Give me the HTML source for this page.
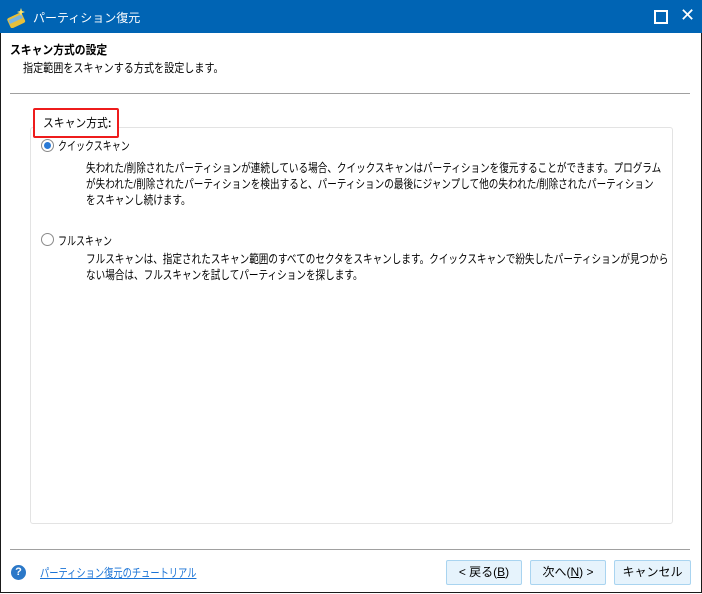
<!DOCTYPE html>
<html><head><meta charset="utf-8"><style>
body{margin:0;width:702px;height:594px;overflow:hidden;font-family:"Liberation Sans","Noto Sans CJK JP",sans-serif;font-size:12px;color:#000;background:#fff;position:relative}
.a{position:absolute;white-space:nowrap;transform-origin:left top}
.win{position:absolute;left:0;top:0;width:700px;height:592px;border:1px solid #1a1a1a;border-top:none}
.title{position:absolute;left:0;top:0;width:702px;height:33px;background:#0064b4}
.btn{position:absolute;top:560px;height:23px;border:1px solid #a9d4f0;background:#e6f3fc;border-radius:2px;text-align:center;line-height:23px;font-size:12px}
.radio{position:absolute;width:11px;height:11px;border:1px solid #8a8a8a;border-radius:50%;background:#fff}
</style></head><body>
<div class="win"></div>
<div class="title"></div>
<svg class="a" style="left:6px;top:6px" width="22" height="22" viewBox="0 0 22 22"><rect x="2" y="9" width="16" height="11" rx="2" fill="#e8c03a" transform="rotate(-25 10 14)"/><rect x="3" y="11" width="14" height="4" fill="#7ab4e0" transform="rotate(-25 10 14)"/><path d="M15 2l1 3 3 1-3 1-1 3-1-3-3-1 3-1z" fill="#ffe46a"/></svg>
<div class="a" style="left:33px;top:9px;color:#fff">パーティション復元</div>
<div class="a" style="left:654px;top:10px;width:10px;height:10px;border:2px solid #fff"></div>
<div class="a" style="left:680px;top:5px;color:#fff;font-size:18px;line-height:20px">✕</div>
<div class="a" style="left:10px;top:41px;font-weight:bold;transform:scaleX(0.9)">スキャン方式の設定</div>
<div class="a" style="left:23px;top:59px;transform:scaleX(0.84)">指定範囲をスキャンする方式を設定します。</div>
<div class="a" style="left:10px;top:93px;width:680px;height:1px;background:#a0a0a0"></div>
<div class="a" style="left:30px;top:127px;width:641px;height:395px;border:1px solid #e3e3e3;border-radius:3px"></div>
<div class="a" style="left:33px;top:108px;width:82px;height:26px;border:2px solid #ee1c1c;background:#fff;border-radius:2px"></div>
<div class="a" style="left:43px;top:114px;transform:scaleX(0.9)">スキャン方式<b>:</b></div>
<div class="radio" style="left:41px;top:139px"><div style="position:absolute;left:2px;top:2px;width:7px;height:7px;border-radius:50%;background:#2a7ad6"></div></div>
<div class="a" style="left:58px;top:137px;transform:scaleX(0.75)">クイックスキャン</div>
<div class="a" style="left:86px;top:160px;line-height:16px;transform:scaleX(0.8)">失われた/削除されたパーティションが連続している場合、クイックスキャンはパーティションを復元することができます。プログラム<br>が失われた/削除されたパーティションを検出すると、パーティションの最後にジャンプして他の失われた/削除されたパーティション<br>をスキャンし続けます。</div>
<div class="radio" style="left:41px;top:233px"></div>
<div class="a" style="left:58px;top:232px;transform:scaleX(0.75)">フルスキャン</div>
<div class="a" style="left:86px;top:251px;line-height:16px;transform:scaleX(0.8)">フルスキャンは、指定されたスキャン範囲のすべてのセクタをスキャンします。クイックスキャンで紛失したパーティションが見つから<br>ない場合は、フルスキャンを試してパーティションを探します。</div>
<div class="a" style="left:10px;top:549px;width:680px;height:1px;background:#a0a0a0"></div>
<div class="a" style="left:11px;top:565px;width:15px;height:15px;border-radius:50%;background:#2b78c8;color:#fff;font-weight:bold;font-size:11px;text-align:center;line-height:15px">?</div>
<div class="a" style="left:40px;top:564px;color:#1a73d6;text-decoration:underline;transform:scaleX(0.77)">パーティション復元のチュートリアル</div>
<div class="btn" style="left:446px;width:74px">&lt; 戻る(<u>B</u>)</div>
<div class="btn" style="left:530px;width:74px">次へ(<u>N</u>) &gt;</div>
<div class="btn" style="left:614px;width:75px">キャンセル</div>
</body></html>
